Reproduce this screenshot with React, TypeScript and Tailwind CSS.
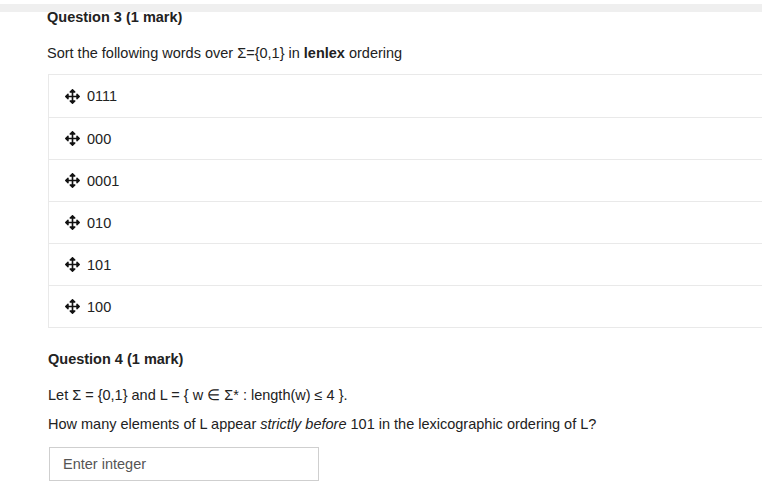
import React from "react";
import { FaArrowsAlt } from "react-icons/fa";

const words = ["0111", "000", "0001", "010", "101", "100"];

export default function App() {
  return (
    <div
      className="relative w-[762px] h-[499px] overflow-hidden bg-white text-[#222] text-[14.5px]"
      style={{ fontFamily: '"Liberation Sans", Arial, sans-serif' }}
    >
      <div className="absolute left-0 right-0 top-[4px] h-[8px] bg-[#efefef]" />
      <div className="pl-[47px] pt-[7px] flex flex-col">
        <div className="font-bold leading-[20px]">Question 3 (1 mark)</div>
        <div className="mt-[16px] leading-[20px]">
          Sort the following words over Σ={"{0,1}"} in <b>lenlex</b> ordering
        </div>
        <div className="mt-[11px] ml-[1px] w-[760px] border border-[#e9e9e9] border-r-0">
          {words.map((w, i) => (
            <div
              key={w}
              className={`h-[42px] flex items-center pl-[16px] gap-[7px] ${i > 0 ? "border-t border-[#e9e9e9]" : ""}`}
            >
              <FaArrowsAlt className="w-[15px] h-[15px] text-[#111]" />
              <span className="leading-[20px]">{w}</span>
            </div>
          ))}
        </div>
        <div className="mt-[21px] pl-[1px] font-bold leading-[20px]">Question 4 (1 mark)</div>
        <div className="mt-[16px] pl-[1px] leading-[20px]">
          Let Σ = {"{0,1}"} and L = {"{"} w ∈ Σ* : length(w) ≤ 4 {"}"}.
        </div>
        <div className="mt-[9px] pl-[1px] leading-[20px]">
          How many elements of L appear <i>strictly before</i> 101 in the lexicographic ordering of L?
        </div>
        <input
          type="text"
          placeholder="Enter integer"
          className="mt-[13px] ml-[2px] w-[270px] h-[34px] border border-[#cfcfcf] px-[13px] text-[14.5px] placeholder:text-[#555] outline-none"
          style={{ fontFamily: '"Liberation Sans", Arial, sans-serif' }}
        />
      </div>
    </div>
  );
}
